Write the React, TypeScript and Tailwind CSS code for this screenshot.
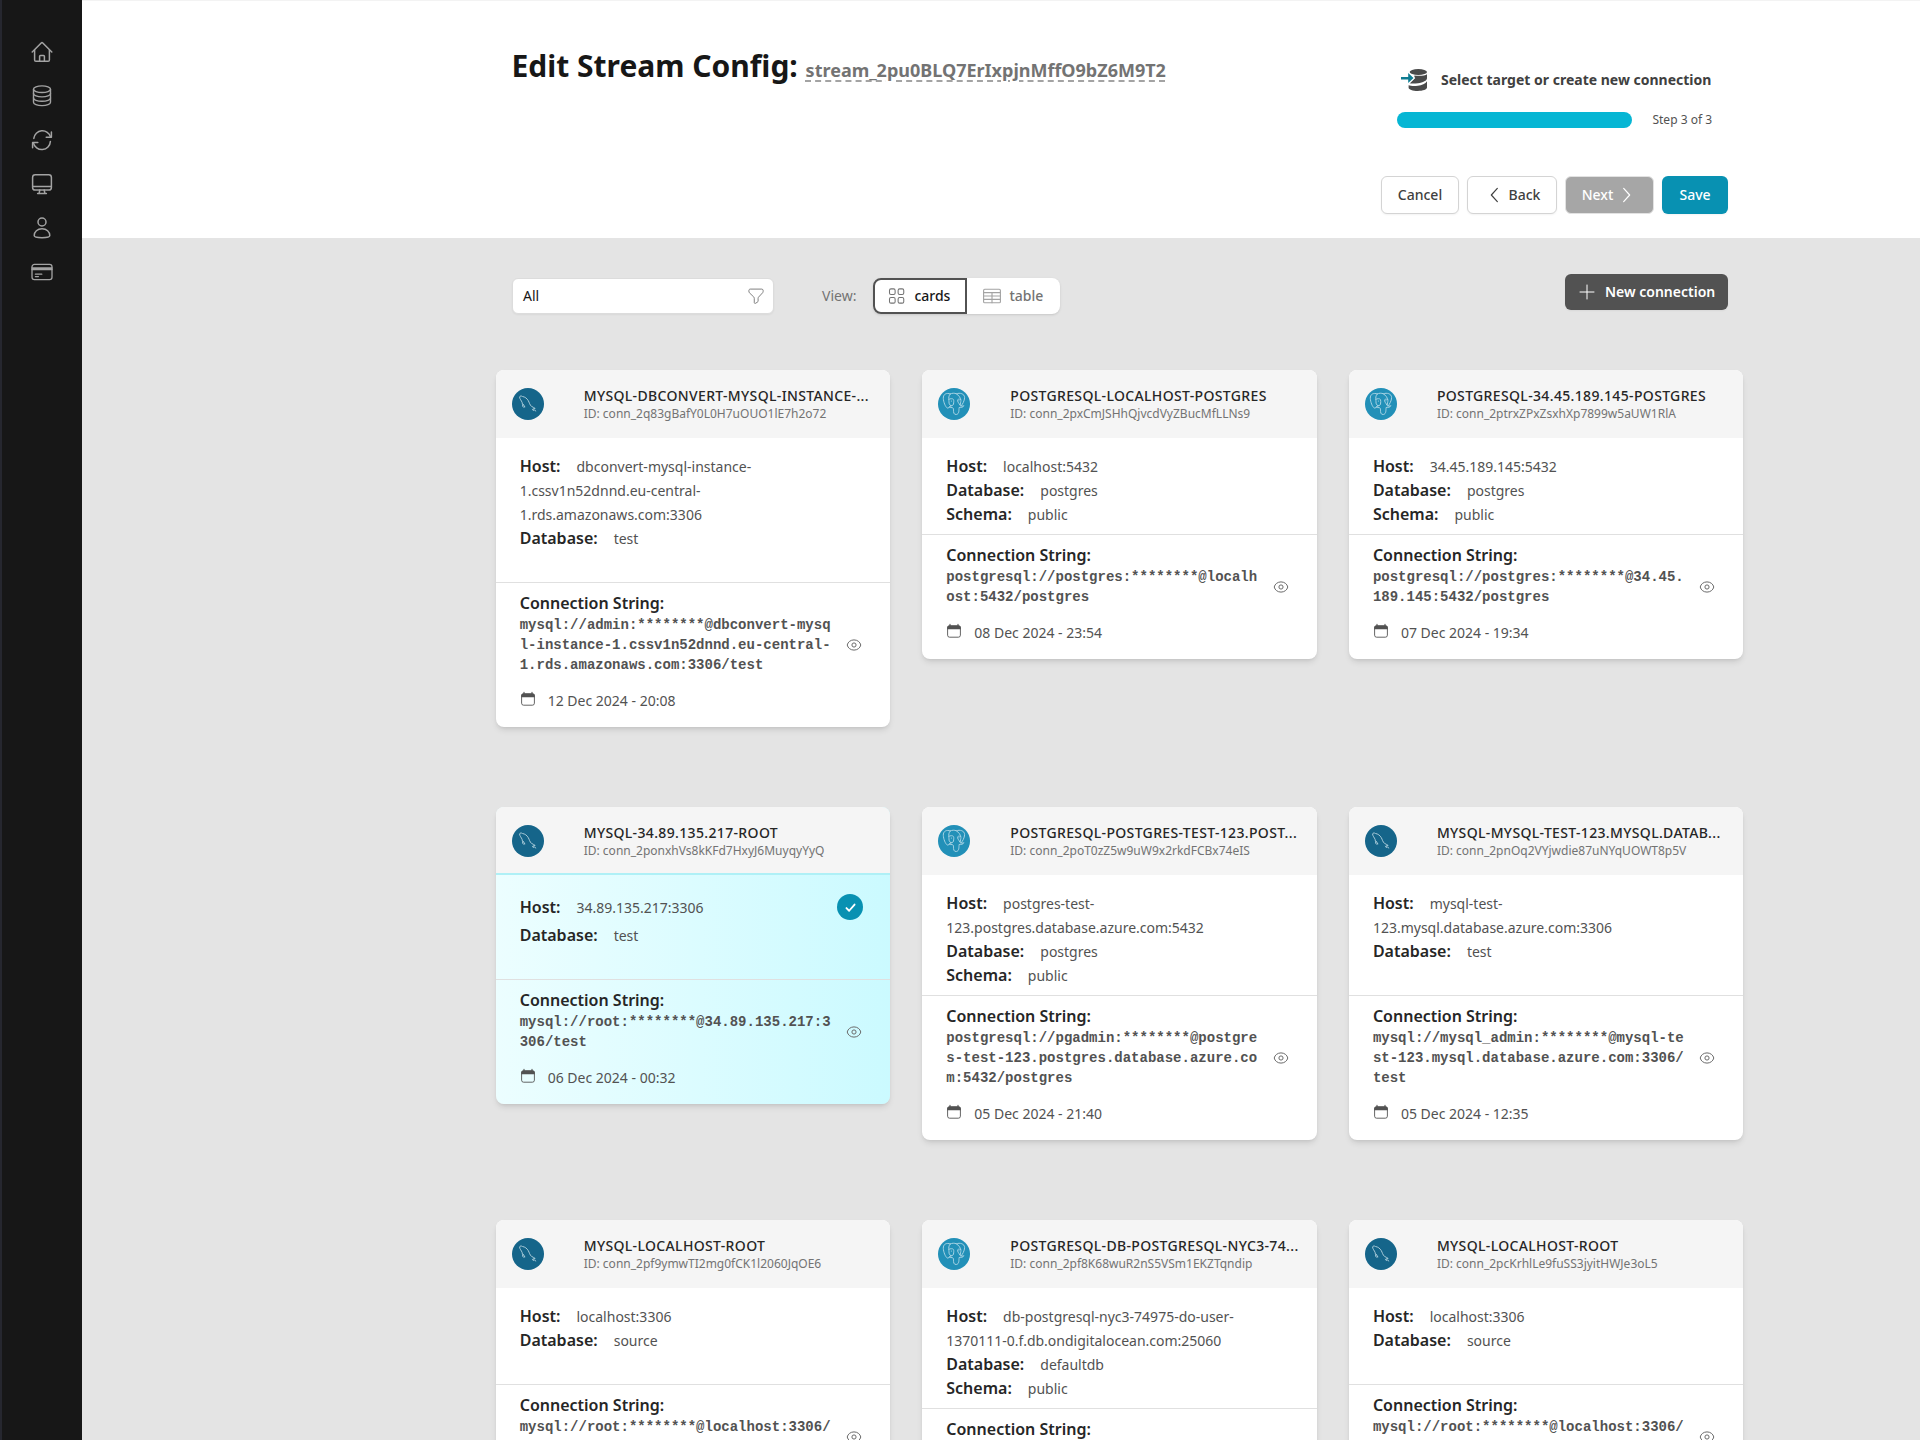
import type { ReactNode } from "react";

type IconProps = { className?: string };

const Svg = ({ className = "", children, w = 1.5, box = 24 }: IconProps & { children: ReactNode; w?: number; box?: number }) => (
  <svg
    className={"block shrink-0 " + className}
    viewBox={`0 0 ${box} ${box}`}
    fill="none"
    stroke="currentColor"
    strokeWidth={w}
    strokeLinecap="round"
    strokeLinejoin="round"
  >
    {children}
  </svg>
);

const HomeIcon = () => (
  <Svg className="size-6">
    <path d="M2.200 12 11.200 3a1.200 1.200 0 0 1 1.600 0L21.800 12" />
    <path d="M4.600 10v10c0 .7.5 1.300 1.300 1.300h12.200c.8 0 1.300-.6 1.300-1.300V10" />
    <path d="M9.600 21.300v-5c0-.5.4-.9.9-.9h3c.5 0 .9.4.9.9v5" />
  </Svg>
);
const DatabaseIcon = () => (
  <Svg className="size-6" w={1.4}>
    <ellipse cx="12" cy="5.200" rx="8.500" ry="3.300" />
    <path d="M3.500 5.200v13c0 1.900 3.800 3.400 8.500 3.400s8.500-1.500 8.500-3.400v-13" />
    <path d="M3.500 9.500c0 1.900 3.800 3.400 8.500 3.400s8.500-1.500 8.500-3.400M3.500 13.900c0 1.900 3.800 3.400 8.500 3.400s8.500-1.500 8.500-3.400" />
  </Svg>
);
const RefreshIcon = () => (
  <Svg className="size-6">
    <path d="M3.800 10.400A8.600 8.600 0 0 1 20.600 9M20.400 13.400A8.600 8.600 0 0 1 3.400 14.800" />
    <path d="M21.400 4v5.200h-5.200M2.600 19.800v-5.200h5.200" />
  </Svg>
);
const MonitorIcon = () => (
  <Svg className="size-6">
    <rect x="2.600" y="2.800" width="18.800" height="15.200" rx="2.600" />
    <path d="M2.800 14.400h18.400M9.800 18 9.200 21M14.200 18l.6 3M7.600 21.400h8.800" />
  </Svg>
);
const UserIcon = () => (
  <Svg className="size-6">
    <circle cx="12" cy="6" r="4" />
    <path d="M4.200 19.600c0-4 3.200-6.800 7.800-6.800s7.800 2.800 7.800 6.800c0 1.300-3.400 2.200-7.800 2.200s-7.800-.9-7.800-2.200Z" />
  </Svg>
);
const CardIcon = () => (
  <Svg className="size-6" w={1.3}>
    <rect x="2" y="4.400" width="20" height="15.200" rx="2.400" />
    <path d="M2 8h20M2 9.500h20M5.400 14.200h6.400M5.400 16.600h3" />
  </Svg>
);

const MysqlLogo = () => (
  <span className="flex size-8 shrink-0 items-center justify-center rounded-full bg-[#15658a] text-[#a9cbd9]">
    <svg className="size-8" viewBox="0 0 32 32" fill="none" stroke="currentColor" strokeWidth="1" strokeLinecap="round" strokeLinejoin="round">
      <path d="M12.800 18.800c-.5.600-1.500.7-2-.3-.4-1.300-.2-2.700-.7-4.100C9.400 12.600 7.600 10.900 7.600 9c.3-1.200 1.700-1.300 2.900-.5 2.500.4 4.500 1.900 5.800 4.200 1.100 1.900 1.400 4.100 3.200 5.700 1.200.8 2.700 1.100 3.700 2.100l-2 .4 1.300 1.200 1.300.9" />
      <path d="m11.200 16.300 1.600 2.500M20.500 21.200l.9 1.400" />
    </svg>
  </span>
);

const PostgresLogo = () => (
  <span className="flex size-8 shrink-0 items-center justify-center rounded-full bg-[#2290b8] text-[#a6d3e4]">
    <svg className="size-8" viewBox="0 0 32 32" fill="none" stroke="currentColor" strokeWidth="1" strokeLinecap="round" strokeLinejoin="round">
      <path d="M12.200 5.900C8.400 4.500 5.100 6.200 5.300 10.400c.2 3.500 2 8.500 4 9.600 1.200.5 2.200-1.200 3.200-2.500" />
      <path d="M12.200 5.900c2-.9 4.300-.9 6.200-.1 3.300-1.300 8.300-.2 8.200 3.900-.1 3-2 6.700-3.700 8.400" />
      <path d="M12.200 6.100c-1.600 1.500-1.600 4-1.300 6.200.3 2.300-.3 3.700 1.400 4.900 1.500.9 2.900.2 3.200-1.200.2-1.500.5-3.200 0-4.400-.8-1.300-3-1-4.500-.4" />
      <path d="M18.400 5.800c2.500 1.600 4.300 4.200 4.500 6.500.1 2-.9 3.200-.5 5.200.8 1 2.600.5 3.500.2-.8 1.600-3.200 2.100-4.800 1.800-.3 2.700.3 6.500-2.800 7-2.800.2-2.700-2.400-2.800-4.400 0-1.500-.2-2.300-1.400-2.500-1.400-.1-2.200.1-2.900-.5 1-.4 1.900-.2 2.600-1.500" />
      <path d="M22.700 11.300c-1.700-.5-3.300-.2-3.200 1.300.2 1.800 1.700 2.500 2.300 4.300M13.400 13v.2M20.900 12.700v.2" />
    </svg>
  </span>
);

const TargetIcon = () => (
  <svg className="h-6 w-[26px] shrink-0" viewBox="0 0 26 24">
    <g fill="#4a4a4a">
      <ellipse cx="17.300" cy="4" rx="8.700" ry="3" />
      <path d="M26 6.200v4c0 2.400-4 4.200-9 5-3.500.5-6.400.5-8.600 0l5-4.700V7.500c5.400.8 10.600.2 12.600-1.300Z" />
      <path d="M26 13.200v6.300c0 2-4 3.400-9.200 3.400s-9-1.300-9.200-3.200v-2.500c2 .8 5.300 1 9.200.6 4-.4 7.700-2.200 9.200-4.600Z" />
    </g>
    <path d="M0 8.900h7.200V5.100l5.300 5-5.300 5v-3.600H0Z" fill="#0e7c92" stroke="#fff" strokeWidth="2.400" paintOrder="stroke" />
  </svg>
);

const EyeIcon = () => (
  <svg className="size-4" viewBox="0 0 16 16" fill="none" stroke="currentColor" strokeWidth="1">
    <path d="M1.200 8C1.900 5 4.600 2.900 8 2.900S14.100 5 14.800 8C14.100 11 11.400 13.100 8 13.100S1.900 11 1.200 8Z" />
    <circle cx="8" cy="8" r="2.100" />
  </svg>
);

const CalendarIcon = () => (
  <svg className="size-4 shrink-0 text-[#525252]" viewBox="0 0 16 16" fill="none" stroke="currentColor">
    <rect x="1.600" y="2.800" width="12.800" height="11.400" rx="2" strokeWidth="0.9" />
    <path d="M1.200 6.200V4.600c0-1.200.9-2.100 2.100-2.100h9.400c1.200 0 2.100.9 2.100 2.100v1.600Z" fill="currentColor" stroke="none" />
    <path d="M4 1.300v2M12 1.300v2" strokeWidth="1.100" strokeLinecap="round" />
  </svg>
);

type Connection = {
  kind: "mysql" | "postgres";
  name: string;
  id: string;
  host: string;
  database: string;
  schema?: string;
  url: string;
  date: string;
  selected?: boolean;
};

const connections: Connection[] = [
  { kind: "mysql", name: "MYSQL-DBCONVERT-MYSQL-INSTANCE-...", id: "conn_2q83gBafY0L0H7uOUO1lE7h2o72", host: "dbconvert-mysql-instance-1.cssv1n52dnnd.eu-central-1.rds.amazonaws.com:3306", database: "test", url: "mysql://admin:********@dbconvert-mysql-instance-1.cssv1n52dnnd.eu-central-1.rds.amazonaws.com:3306/test", date: "12 Dec 2024 - 20:08" },
  { kind: "postgres", name: "POSTGRESQL-LOCALHOST-POSTGRES", id: "conn_2pxCmJSHhQjvcdVyZBucMfLLNs9", host: "localhost:5432", database: "postgres", schema: "public", url: "postgresql://postgres:********@localhost:5432/postgres", date: "08 Dec 2024 - 23:54" },
  { kind: "postgres", name: "POSTGRESQL-34.45.189.145-POSTGRES", id: "conn_2ptrxZPxZsxhXp7899w5aUW1RlA", host: "34.45.189.145:5432", database: "postgres", schema: "public", url: "postgresql://postgres:********@34.45.189.145:5432/postgres", date: "07 Dec 2024 - 19:34" },
  { kind: "mysql", name: "MYSQL-34.89.135.217-ROOT", id: "conn_2ponxhVs8kKFd7HxyJ6MuyqyYyQ", host: "34.89.135.217:3306", database: "test", url: "mysql://root:********@34.89.135.217:3306/test", date: "06 Dec 2024 - 00:32", selected: true },
  { kind: "postgres", name: "POSTGRESQL-POSTGRES-TEST-123.POST...", id: "conn_2poT0zZ5w9uW9x2rkdFCBx74eIS", host: "postgres-test-123.postgres.database.azure.com:5432", database: "postgres", schema: "public", url: "postgresql://pgadmin:********@postgres-test-123.postgres.database.azure.com:5432/postgres", date: "05 Dec 2024 - 21:40" },
  { kind: "mysql", name: "MYSQL-MYSQL-TEST-123.MYSQL.DATAB...", id: "conn_2pnOq2VYjwdie87uNYqUOWT8p5V", host: "mysql-test-123.mysql.database.azure.com:3306", database: "test", url: "mysql://mysql_admin:********@mysql-test-123.mysql.database.azure.com:3306/test", date: "05 Dec 2024 - 12:35" },
  { kind: "mysql", name: "MYSQL-LOCALHOST-ROOT", id: "conn_2pf9ymwTI2mg0fCK1l2060JqOE6", host: "localhost:3306", database: "source", url: "mysql://root:********@localhost:3306/source", date: "04 Dec 2024 - 18:11" },
  { kind: "postgres", name: "POSTGRESQL-DB-POSTGRESQL-NYC3-74...", id: "conn_2pf8K68wuR2nS5VSm1EKZTqndip", host: "db-postgresql-nyc3-74975-do-user-1370111-0.f.db.ondigitalocean.com:25060", database: "defaultdb", schema: "public", url: "postgresql://doadmin:********@db-postgresql-nyc3-74975-do-user-1370111-0.f.db.ondigitalocean.com:25060/defaultdb", date: "04 Dec 2024 - 18:02" },
  { kind: "mysql", name: "MYSQL-LOCALHOST-ROOT", id: "conn_2pcKrhlLe9fuSS3jyitHWJe3oL5", host: "localhost:3306", database: "source", url: "mysql://root:********@localhost:3306/source", date: "03 Dec 2024 - 20:45" },
];

const Field = ({ label, value }: { label: string; value: string }) => (
  <p className="text-base leading-6 font-semibold text-[#262626]">
    {label}:<span className="ml-4 text-sm leading-none font-normal text-[#525252]">{value}</span>
  </p>
);

const ConnectionCard = ({ c }: { c: Connection }) => (
  <article className={`overflow-hidden rounded-lg shadow-md ${c.selected ? "bg-linear-to-r from-[#ecfeff] to-[#cbfaff]" : "bg-white"}`}>
    <header className={`flex h-[68px] items-center gap-10 bg-[#f5f5f5] px-4 ${c.selected ? "border-b-2 border-[#aff0f6] pt-0.5" : ""}`}>
      {c.kind === "mysql" ? <MysqlLogo /> : <PostgresLogo />}
      <div className="min-w-0 flex-1">
        <h3 className="text-sm leading-5 font-medium tracking-wide whitespace-nowrap text-[#262626]">{c.name}</h3>
        <p className="text-xs leading-4 whitespace-nowrap text-[#737373]">ID: {c.id}</p>
      </div>
    </header>
    <div className="px-6 pt-4 pb-2">
      <div className={c.selected ? "flex h-8 items-center justify-between" : ""}>
        <Field label="Host" value={c.host} />
        {c.selected && (
          <span className="mr-[3px] flex size-[26px] items-center justify-center rounded-full bg-[#0891b2] text-white">
            <Svg className="size-[13px]" w={3.4}>
              <path d="m4.500 13 5 5L19.500 6.500" />
            </Svg>
          </span>
        )}
      </div>
      <Field label="Database" value={c.database} />
      {c.schema ? <Field label="Schema" value={c.schema} /> : <div className="h-6" />}
    </div>
    <div className="border-t border-[#e0e0e0] px-6 pt-2 pb-4">
      <p className="text-base leading-6 font-semibold text-[#262626]">Connection String:</p>
      <div className="flex items-center gap-2">
        <p className="flex-1 text-sm leading-5 font-bold break-all text-[#525252] [font-family:'Liberation_Mono',monospace]">{c.url}</p>
        <button className="flex w-6 justify-center text-[#6b6b6b]">
          <EyeIcon />
        </button>
      </div>
      <div className="mt-4 flex h-5 gap-3 text-sm leading-5 text-[#525252]">
        <CalendarIcon />
        <span>{c.date}</span>
      </div>
    </div>
  </article>
);

export default function App() {
  return (
    <div className="flex h-[1440px] w-[1920px] overflow-hidden bg-[#e4e4e4] [font-family:'Noto_Sans',sans-serif]">
      <nav className="flex w-[82px] shrink-0 flex-col items-center gap-5 border-l-2 border-[#26272f] bg-[#171717] pt-10 text-[#a3a3a3]">
        <HomeIcon />
        <DatabaseIcon />
        <RefreshIcon />
        <MonitorIcon />
        <UserIcon />
        <CardIcon />
      </nav>
      <main className="min-w-0 flex-1">
        <div className="flex h-[238px] justify-between border-t border-[#f3f3f3] bg-white pr-48 pl-[429.500px]">
          <h1 className="mt-[45px] text-[30px] leading-10 font-bold whitespace-nowrap text-[#171717]">
            Edit Stream Config:{" "}
            <span className="text-lg text-[#737373] underline decoration-[#a3a3a3] decoration-dashed decoration-2 underline-offset-[3px]">stream_2pu0BLQ7ErIxpjnMffO9bZ6M9T2</span>
          </h1>
          <div className="flex flex-col items-end pt-[67px]">
            <div className="flex w-[331px] flex-col gap-[18px] pr-4">
              <div className="flex h-6 items-center gap-[14px] pl-1">
                <TargetIcon />
                <span className="text-sm leading-5 font-bold whitespace-nowrap text-[#404040]">Select target or create new connection</span>
              </div>
              <div className="flex h-5 items-center justify-between">
                <div className="h-4 w-[235px] rounded-full bg-[#06b6d4]" />
                <span className="text-xs leading-4 text-[#525252]">Step 3 of 3</span>
              </div>
            </div>
            <div className="mt-[46px] flex h-[38px] gap-2 text-sm font-medium text-[#404040]">
              <button className="w-[78px] rounded-md border border-[#d4d4d4] bg-white shadow-xs">Cancel</button>
              <button className="flex w-[90px] items-center justify-center gap-[7px] rounded-md border border-[#d4d4d4] bg-white pl-0.5 shadow-xs">
                <Svg className="size-4" w={1.8}>
                  <path d="m17 2-9 10 9 10" />
                </Svg>
                Back
              </button>
              <button className="flex w-[89px] items-center justify-center gap-1.5 rounded-md border border-[#e2e2e2] bg-[#a6a6a6] pr-0.5 text-white">
                Next
                <Svg className="size-4" w={1.8}>
                  <path d="m7 2 9 10-9 10" />
                </Svg>
              </button>
              <button className="w-[66px] rounded-md bg-[#0891b2] text-white shadow-xs">Save</button>
            </div>
          </div>
        </div>
        <div className="flex h-[132px] pt-9 pr-48 pl-[430px] text-sm">
          <div className="mt-1 flex h-9 w-[262px] items-center justify-between rounded-md border border-[#dcdcdc] bg-white pr-2 pl-2.5 text-[#171717] shadow-xs">
            All
            <Svg className="size-[18px] text-[#737373]" w={1.200}>
              <path d="M2.500 4.500c0-1 .8-1.700 1.800-1.700h15.400c1 0 1.800.7 1.800 1.700v1.400c0 .7-.3 1.300-.7 1.800l-5.300 5.700c-.4.500-.7 1-.7 1.700v3.500c0 .7-.3 1.300-.9 1.600l-2.700 1.600c-.7.400-1.500-.1-1.500-.9v-5.800c0-.6-.2-1.200-.6-1.700L3.200 7.700c-.4-.5-.7-1.100-.7-1.800Z" />
            </Svg>
          </div>
          <span className="mt-1 ml-12 leading-9 text-[#737373]">View:</span>
          <div className="mt-1 ml-[16.500px] flex h-9 rounded-lg bg-white font-medium shadow-sm">
            <button className="flex w-[94px] items-center justify-center gap-2 rounded-l-lg border-2 border-[#525252] pr-px text-[#171717]">
              <Svg className="size-[18px] text-[#737373]" w={1.400}>
                <rect x="2" y="2.500" width="7.500" height="7.500" rx="2" />
                <rect x="13.500" y="2.500" width="7.500" height="7.500" rx="2" />
                <rect x="2" y="14" width="7.500" height="7.500" rx="2" />
                <rect x="13.500" y="14" width="7.500" height="7.500" rx="2" />
              </Svg>
              cards
            </button>
            <button className="flex w-[93px] items-center justify-center gap-2 text-[#737373]">
              <Svg className="size-[18px] text-[#a3a3a3]" w={1.500}>
                <rect x="0.800" y="3" width="22.400" height="18" rx="1.500" />
                <path d="M.8 7.500h22.400M.8 12h22.400M.8 16.500h22.400M12 7.500V21" />
              </Svg>
              table
            </button>
          </div>
          <button className="ml-auto flex h-9 w-[163px] items-center gap-2.5 rounded-md bg-[#525252] pl-[14px] font-semibold whitespace-nowrap text-white shadow-xs">
            <Svg className="size-4" w={1.500}>
              <path d="M12 1.500v21M1.500 12h21" />
            </Svg>
            New connection
          </button>
        </div>
        <div className="grid grid-cols-3 items-start gap-x-8 gap-y-20 pr-[176.500px] pl-[413.700px]">
          {connections.map((c) => (
            <ConnectionCard key={c.id} c={c} />
          ))}
        </div>
      </main>
    </div>
  );
}
